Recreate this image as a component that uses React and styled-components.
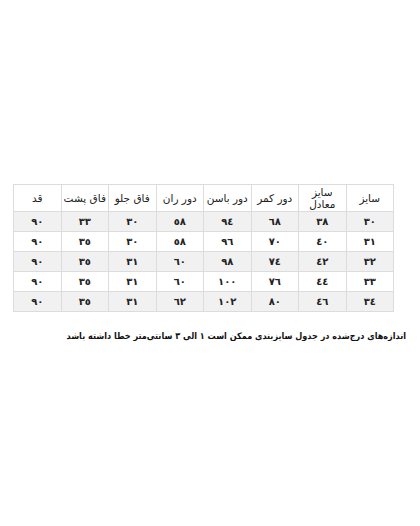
import React from "react";
import styled, { createGlobalStyle } from "styled-components";

const GlobalStyle = createGlobalStyle`
  body {
    margin: 0;
    background: #fff;
    font-family: "DejaVu Sans", "Noto Sans", sans-serif;
  }
`;

const headers = [
  "سایز",
  "سایز معادل",
  "دور کمر",
  "دور باسن",
  "دور ران",
  "فاق جلو",
  "فاق پشت",
  "قد",
];

const rows = [
  ["٣٠", "٣٨", "٦٨", "٩٤", "٥٨", "٣٠", "٣٣", "٩٠"],
  ["٣١", "٤٠", "٧٠", "٩٦", "٥٨", "٣٠", "٣٥", "٩٠"],
  ["٣٢", "٤٢", "٧٤", "٩٨", "٦٠", "٣١", "٣٥", "٩٠"],
  ["٣٣", "٤٤", "٧٦", "١٠٠", "٦٠", "٣١", "٣٥", "٩٠"],
  ["٣٤", "٤٦", "٨٠", "١٠٢", "٦٢", "٣١", "٣٥", "٩٠"],
];

const App = () => {
  return (
    <Page dir="rtl">
      <GlobalStyle />
      <Table>
        <thead>
          <tr>
            {headers.map((h) => (
              <Th key={h}>{h === "سایز معادل" ? <Wrap>{h}</Wrap> : h}</Th>
            ))}
          </tr>
        </thead>
        <tbody>
          {rows.map((r, i) => (
            <Row key={i} $striped={i % 2 === 0}>
              {r.map((c, j) => (
                <Td key={j}>{c}</Td>
              ))}
            </Row>
          ))}
        </tbody>
      </Table>
      <Note>
        اندازه‌های درج‌شده در جدول سایزبندی ممکن است ١ الی ٣ سانتی‌متر خطا
        داشته باشد
      </Note>
    </Page>
  );
};

const Page = styled.div`
  padding: 184px 26px 0 13px;
  width: 420px;
  box-sizing: border-box;
`;

const Table = styled.table`
  width: 381px;
  border-collapse: collapse;
  table-layout: fixed;
`;

const Th = styled.th`
  height: 26px;
  border: 1px solid #dcdcdc;
  font-weight: normal;
  font-size: 10.5px;
  color: #222;
  text-align: center;
  padding: 0;
  line-height: 12px;
`;

const Wrap = styled.span`
  display: inline-block;
  width: 34px;
`;

const Row = styled.tr`
  background: ${(p) => (p.$striped ? "#f1f1f1" : "#fff")};
`;

const Td = styled.td`
  height: 19px;
  border: 1px solid #dcdcdc;
  font-size: 10px;
  font-weight: bold;
  color: #222;
  text-align: center;
  padding: 0;
`;

const Note = styled.p`
  margin: 19px -12px 0 0;
  font-family: "DejaVu Sans Condensed", "DejaVu Sans", sans-serif;
  font-size: 9px;
  font-weight: bold;
  color: #111;
  white-space: nowrap;
  letter-spacing: -0.28px;
`;

export default App;
